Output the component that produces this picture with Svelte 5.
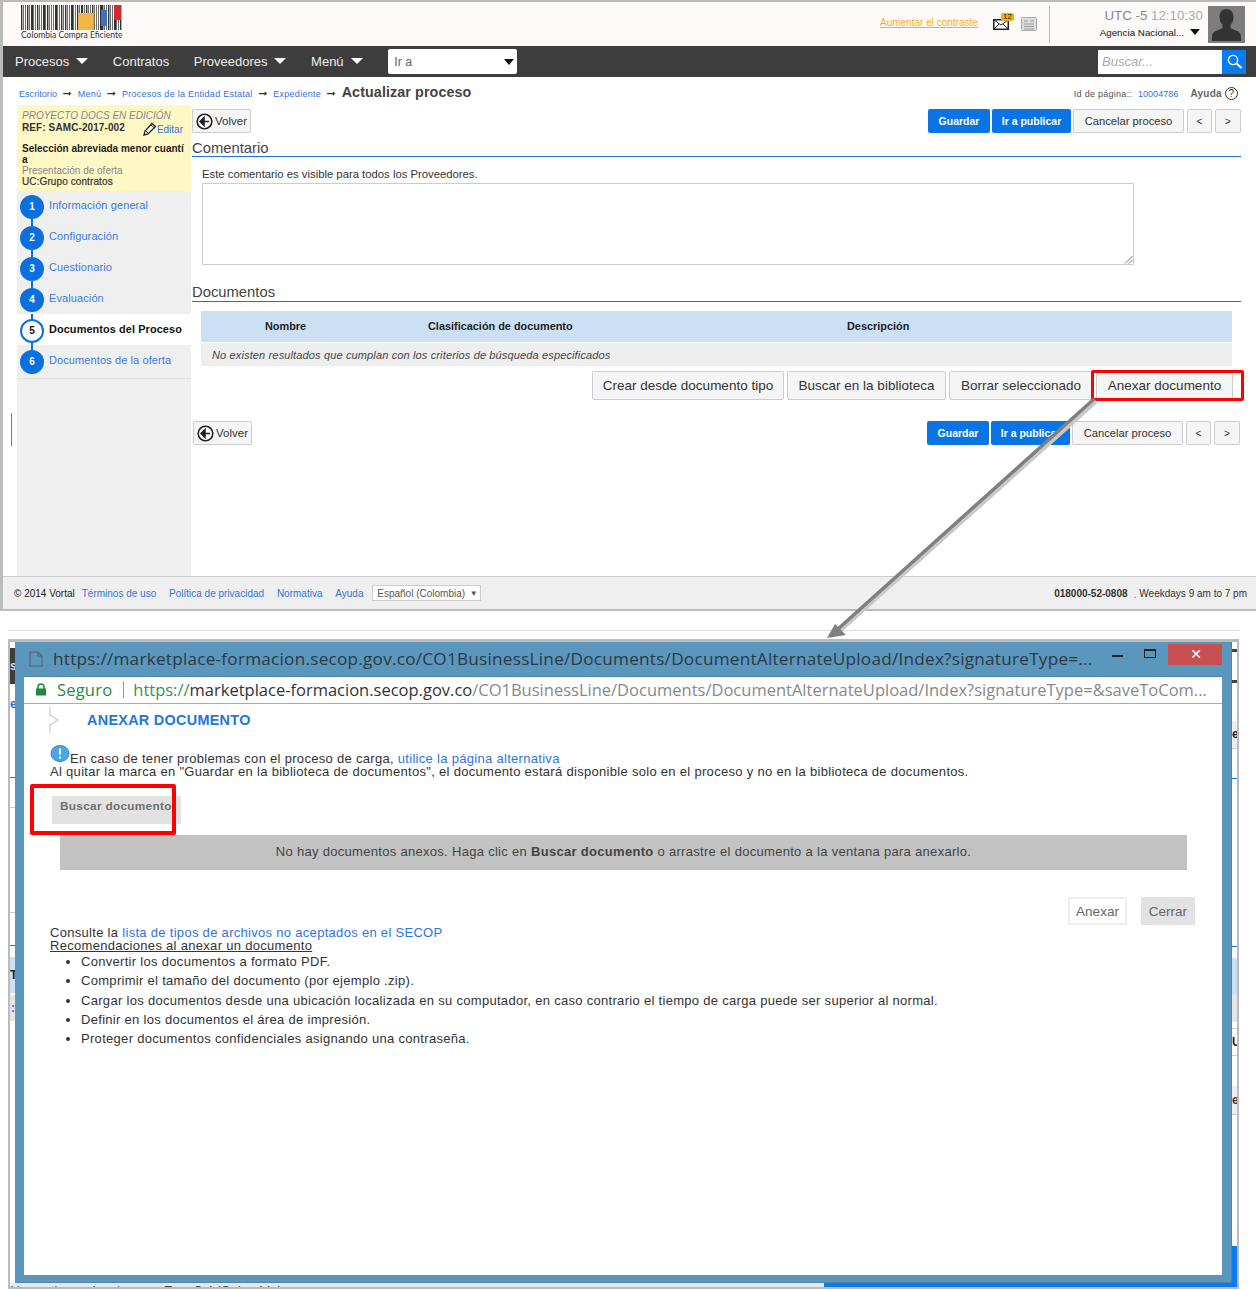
<script>
const navItems = [
	{ label: 'Procesos', caret: true },
	{ label: 'Contratos', caret: false },
	{ label: 'Proveedores', caret: true },
	{ label: 'Menú', caret: true }
];
const crumbs = ['Escritorio', 'Menú', 'Procesos de la Entidad Estatal', 'Expediente'];
const steps = [
	{ n: 1, label: 'Información general' },
	{ n: 2, label: 'Configuración' },
	{ n: 3, label: 'Cuestionario' },
	{ n: 4, label: 'Evaluación' },
	{ n: 5, label: 'Documentos del Proceso', active: true },
	{ n: 6, label: 'Documentos de la oferta' }
];
const tips = [
	'Convertir los documentos a formato PDF.',
	'Comprimir el tamaño del documento (por ejemplo .zip).',
	'Cargar los documentos desde una ubicación localizada en su computador, en caso contrario el tiempo de carga puede ser superior al normal.',
	'Definir en los documentos el área de impresión.',
	'Proteger documentos confidenciales asignando una contraseña.'
];
// slivers of the page behind the popup window: height, colour, clipped text
const leftSliver = [
	[6, '#fff'], [36, '#3d3d3d', 's', '#ddd'], [12, '#fff'], [16, '#fff', 'e', '#1a73d8'], [65, '#fff'], [1, '#1a73d8'],
	[29, '#fff'], [1, '#ccc'], [104, '#fff'], [1, '#ccc'], [32, '#fff'], [1, '#1a73d8'],
	[11, '#fff'], [36, '#cce0f5', 'T', '#222'], [2, '#fff'], [26, '#e6e6e6', ':', '#35c'], [262, '#fff'], [17, '#efefef']
];
const rightSliver = [
	[7, '#fff'], [3, '#444'], [28, '#fff'], [3, '#444'], [38, '#fff'], [27, '#eee', 'e', '#223'], [1, '#ccc'],
	[29, '#fff'], [1, '#1a73d8'], [167, '#fff'], [1, '#1a73d8'], [11, '#fff'], [36, '#cce0f5'],
	[28, '#e6e6e6'], [6, '#fff'], [1, '#ccc'], [26, '#fff', 'U', '#313'], [1, '#ccc'], [30, '#fff'], [28, '#eee', 'e:', '#433'],
	[1, '#ccc'], [131, '#fff'], [38, '#0a7cf0']
];
const bars = [2,1,1,2,1,3,1,1,2,1,1,3,1,2,1,1,1,3,1,1,2,1,2,1,1,3,1,1,2,1,3,1,2,1,1,2,1,1,1,3,2,1,1,2,1,1,3,1,1,2];
</script>

<div class="page">
	<section class="shot top">
		<header class="head">
			<div class="logo">
				<svg width="103" height="25" viewBox="0 0 103 25">
					{#each bars as w, i}
						<rect x={i * 2 + (i > 30 ? 1 : 0)} y="0" width={w * 0.7} height="25" fill="#333" />
					{/each}
					<rect x="57" y="8" width="15" height="17" fill="#f4b547" />
					<rect x="80" y="5" width="6" height="16" fill="#3d72b8" />
					<rect x="93" y="0" width="7" height="15" fill="#cf2b36" />
				</svg>
				<span>Colombia Compra Eficiente</span>
			</div>
			<a class="contrast">Aumentar el contraste</a>
			<div class="mail">
				<svg width="16" height="11" viewBox="0 0 16 11"><rect x="0.75" y="0.75" width="14.5" height="9.5" fill="#fff" stroke="#222" stroke-width="1.5" /><path d="M1 1l7 5 7-5M1 10l5-5M15 10l-5-5" fill="none" stroke="#222" /></svg>
				<b>12</b>
			</div>
			<svg class="news" width="16" height="14" viewBox="0 0 16 14"><rect x="0.5" y="0.5" width="15" height="13" rx="1" fill="#ddd" stroke="#aaa" /><path d="M3 4h4M3 7h10M3 9.5h10M3 12h10M9 4h4" stroke="#999" /></svg>
			<div class="divider"></div>
			<div class="user">
				<div class="clock">UTC -5 <span>12:10:30</span></div>
				<div class="agency">Agencia Nacional... <i class="caret black"></i></div>
			</div>
			<div class="avatar">
				<svg width="37" height="37" viewBox="0 0 37 37"><path d="M18.5 3c-5 0-7 4-7 8 0 3 1 6 3 8v3c-3 2-9 3-10 6-.6 2-.5 6-.5 7h29c0-1 .1-5-.5-7-1-3-7-4-10-6v-3c2-2 3-5 3-8 0-4-2-8-7-8z" fill="#333" /></svg>
			</div>
		</header>

		<nav class="nav">
			{#each navItems as item}
				<span class="nav-item">{item.label}{#if item.caret}<i class="caret"></i>{/if}</span>
			{/each}
			<div class="goto"><span>Ir a</span><i class="caret black"></i></div>
			<div class="search">
				<span>Buscar...</span>
				<b><svg width="17" height="17" viewBox="0 0 17 17"><circle cx="7" cy="7" r="4.6" fill="none" stroke="#fff" stroke-width="1.3" /><path d="M10.5 10.5l5 4.5" stroke="#fff" stroke-width="2" /></svg></b>
			</div>
		</nav>

		<div class="crumbs">
			{#each crumbs as c}
				<a>{c}</a><span class="arrow">➞</span>
			{/each}
			<strong>Actualizar proceso</strong>
			<span class="page-id">Id de página:: <a>10004786</a></span>
			<span class="help">Ayuda <i>?</i></span>
		</div>

		<div class="main">
			<div class="gutter"><div class="tick"></div></div>
			<aside class="side">
				<div class="project">
					<em>PROYECTO DOCS EN EDICIÓN</em>
					<div class="ref">
						<b>REF: SAMC-2017-002</b>
						<span class="edit">
							<svg width="14" height="14" viewBox="0 0 14 14"><path d="M1 13l1-4 7-7.5 3.500 3L5 12z" fill="#fff" stroke="#222" stroke-width="1.300" /><path d="M8 3l3.500 3M3 9l2.500 2.500" stroke="#222" /></svg><a>Editar</a>
						</span>
					</div>
					<b class="kind">Selección abreviada menor cuantí a</b>
					<span class="muted">Presentación de oferta</span>
					<b class="uc">UC:Grupo contratos</b>
				</div>
				<ul class="steps">
					{#each steps as s, i}
						<li class:active={s.active}>
							<span class="num" class:first={i === 0}>{s.n}</span>
							<span class="step-label">{s.label}</span>
						</li>
					{/each}
				</ul>
			</aside>

			<div class="content">
				<div class="toolbar">
					<button class="btn plain"><svg width="17" height="17" viewBox="0 0 17 17"><circle cx="8.500" cy="8.500" r="7.300" fill="#fff" stroke="#222" stroke-width="1.600" /><path d="M13 8.500H7M8 4.500l-4 4 4 4z" fill="#222" stroke="#222" stroke-width="1.500" /></svg>Volver</button>
					<div class="grow"></div>
					<button class="btn blue g">Guardar</button>
					<button class="btn blue p">Ir a publicar</button>
					<button class="btn plain c">Cancelar proceso</button>
					<button class="btn plain n lt">&lt;</button>
					<button class="btn plain n">&gt;</button>
				</div>

				<h2 class="sect first-sect">Comentario</h2>
				<p class="note">Este comentario es visible para todos los Proveedores.</p>
				<div class="textarea">
					<svg width="9" height="9" viewBox="0 0 9 9"><path d="M8.500 1L1 8.500M8.500 5L5 8.500" stroke="#777" /></svg>
				</div>

				<h2 class="sect doc-sect">Documentos</h2>
				<div class="table">
					<div class="thead"><b class="c1">Nombre</b><b class="c2">Clasificación de documento</b><b class="c3">Descripción</b></div>
					<div class="empty">No existen resultados que cumplan con los criterios de búsqueda especificados</div>
				</div>
				<div class="doc-actions">
					<button class="big w1">Crear desde documento tipo</button>
					<button class="big w2">Buscar en la biblioteca</button>
					<button class="big w3">Borrar seleccionado</button>
					<button class="big w4">Anexar documento<span class="red-box"></span></button>
				</div>

				<div class="toolbar lower">
					<button class="btn plain"><svg width="17" height="17" viewBox="0 0 17 17"><circle cx="8.500" cy="8.500" r="7.300" fill="#fff" stroke="#222" stroke-width="1.600" /><path d="M13 8.500H7M8 4.500l-4 4 4 4z" fill="#222" stroke="#222" stroke-width="1.500" /></svg>Volver</button>
					<div class="grow"></div>
					<button class="btn blue g">Guardar</button>
					<button class="btn blue p">Ir a publicar</button>
					<button class="btn plain c">Cancelar proceso</button>
					<button class="btn plain n lt">&lt;</button>
					<button class="btn plain n">&gt;</button>
				</div>
			</div>
		</div>

		<footer class="foot">
			<span class="copy">© 2014 Vortal</span>
			<a>Términos de uso</a><a>Política de privacidad</a><a>Normativa</a><a>Ayuda</a>
			<span class="lang">Español (Colombia) <i>▼</i></span>
			<div class="grow"></div>
			<b>018000-52-0808</b><span class="dot">.</span><span>Weekdays 9 am to 7 pm</span>
		</footer>
	</section>

	<hr class="sep" />

	<section class="shot2">
		<div class="body2">
			<div class="sliver left">
				{#each leftSliver as [h, bg, txt, col]}<div style="height:{h}px;line-height:{h}px;background:{bg};color:{col}">{txt ?? ''}</div>{/each}
			</div>
			<div class="win">
				<div class="win-title">
					<svg width="14" height="16" viewBox="0 0 14 16"><path d="M1 1h8l4 4v10H1zM9 1v4h4" fill="none" stroke="#5a6570" stroke-width="1.200" /></svg>
					<span class="win-url">https://marketplace-formacion.secop.gov.co/CO1BusinessLine/Documents/DocumentAlternateUpload/Index?signatureType=...</span>
					<i class="min"></i>
					<i class="max"></i>
					<span class="close">✕</span>
				</div>
				<div class="addr">
					<svg width="12" height="13" viewBox="0 0 12 13"><path d="M3 6V4a3 3 0 0 1 6 0v2" fill="none" stroke="#1e8a3e" stroke-width="1.600" /><rect x="1" y="5.500" width="10" height="7" fill="#1e8a3e" /></svg>
					<span class="secure">Seguro</span>
					<span class="pipe"></span>
					<span class="addr-url"><span class="https">https://</span>marketplace-formacion.secop.gov.co<span class="rest">/CO1BusinessLine/Documents/DocumentAlternateUpload/Index?signatureType=&amp;saveToCom...</span></span>
				</div>
				<div class="pane">
					<div class="pane-head">
						<svg width="11" height="26" viewBox="0 0 11 26"><path d="M1 0v8l8 5-8 5v8" fill="none" stroke="#ccc" stroke-width="1.200" /></svg>
						<h3>ANEXAR DOCUMENTO</h3>
					</div>
					<div class="msg">
						<p><svg class="info" width="20" height="17" viewBox="0 0 20 17"><ellipse cx="10" cy="8.500" rx="9" ry="8" fill="#4aa6e8" stroke="#2b86cf" /><path d="M10 3.500v6M10 11.500v2" stroke="#fff" stroke-width="2" /></svg>En caso de tener problemas con el proceso de carga, <a>utilice la página alternativa</a></p>
						<p>Al quitar la marca en "Guardar en la biblioteca de documentos", el documento estará disponible solo en el proceso y no en la biblioteca de documentos.</p>
					</div>
					<div class="find-row"><button class="find">Buscar documento</button><span class="red-box2"></span></div>
					<div class="nodocs">No hay documentos anexos. Haga clic en <b>Buscar documento</b> o arrastre el documento a la ventana para anexarlo.</div>
					<div class="win-actions">
						<button class="anx">Anexar</button>
						<button class="cls">Cerrar</button>
					</div>
					<div class="consult">Consulte la <a>lista de tipos de archivos no aceptados en el SECOP</a></div>
					<div class="rec">Recomendaciones al anexar un documento</div>
					<ul class="tips">
						{#each tips as t}<li>{t}</li>{/each}
					</ul>
				</div>
			</div>
			<div class="sliver">
				{#each rightSliver as [h, bg, txt, col]}<div style="height:{h}px;line-height:{h}px;background:{bg};color:{col}">{txt ?? ''}</div>{/each}
			</div>
		</div>
		<div class="strip">
			<div class="strip-grey"><a>Normativa</a><a>Ayuda</a><span>Español (Colombia)</span></div>
			<div class="strip-blue"></div>
		</div>
	</section>

	<svg class="pointer" width="1256" height="1290" viewBox="0 0 1256 1290">
		<line x1="1094" y1="399" x2="836" y2="630" stroke="#c9c9c9" stroke-width="5" transform="translate(2 2)" />
		<line x1="1094" y1="399" x2="838" y2="629" stroke="#808080" stroke-width="3.500" />
		<path d="M827 638l8-14 11 11z" fill="#808080" />
	</svg>
</div>

<style>
:global(body) {
	margin: 0;
	background: #fff;
}
.page {
	position: relative;
	width: 1256px;
	height: 1290px;
	overflow: hidden;
	font-family: "Liberation Sans", Arial, sans-serif;
	font-size: 11px;
	color: #222;
}
a {
	color: #2f74e0;
}
button {
	font-family: inherit;
	cursor: pointer;
}
.grow {
	flex: 1;
}
.caret {
	display: inline-block;
	width: 0;
	height: 0;
	border-left: 6px solid transparent;
	border-right: 6px solid transparent;
	border-top: 6px solid #fff;
}
.caret.black {
	border-top-color: #111;
	border-left-width: 5.500px;
	border-right-width: 5.500px;
}

/* top screenshot */
.shot.top {
	height: 607px;
	border-top: 2px solid #bbb;
	border-left: 3px solid #bbb;
	border-bottom: 2px solid #bbb;
	display: flex;
	flex-direction: column;
}
.head {
	height: 44px;
	background: #fffafa;
	display: flex;
	align-items: center;
	flex: none;
}
.logo {
	margin-left: 18px;
	margin-top: -2px;
	width: 110px;
	display: flex;
	flex-direction: column;
}
.logo svg {
	display: block;
}
.logo span {
	font-family: Lato, sans-serif;
	font-size: 8.500px;
	color: #333;
	margin-top: 0;
	line-height: 11px;
	white-space: nowrap;
}
.contrast {
	margin-left: 749px;
	margin-top: -4px;
	color: #f6ad2a;
	font-size: 10px;
	text-decoration: underline;
}
.mail {
	position: relative;
	margin-left: 15px;
	width: 16px;
	height: 11px;
	line-height: 0;
}
.mail b {
	position: absolute;
	left: 8px;
	top: -6px;
	width: 13px;
	height: 8px;
	background: #f2b100;
	border-radius: 2px;
	font-size: 8px;
	font-weight: normal;
	line-height: 8px;
	text-align: center;
}
.news {
	margin-left: 12px;
}
.divider {
	width: 1px;
	height: 37px;
	background: #bbb;
	margin-left: 12px;
}
.user {
	width: 158px;
	padding-right: 8px;
	box-sizing: border-box;
	text-align: right;
	margin-top: -3px;
}
.clock {
	font-size: 13.300px;
	color: #888;
	line-height: 16px;
	margin: 0 -3px 3px 0;
}
.clock span {
	color: #aaa;
}
.agency {
	font-size: 9.800px;
	color: #111;
}
.agency .caret {
	margin-left: 3px;
	vertical-align: 1px;
}
.avatar {
	width: 37px;
	height: 37px;
	background: #7d7d7d;
}
.nav {
	height: 31px;
	background: #3d3d3d;
	display: flex;
	align-items: center;
	flex: none;
	padding-left: 12px;
	color: #eee;
	font-size: 13px;
}
.nav-item {
	margin-right: 24.600px;
	white-space: nowrap;
}
.nav-item .caret {
	margin-left: 7px;
	vertical-align: 2px;
}
.goto {
	width: 129px;
	height: 25px;
	box-sizing: border-box;
	background: #fff;
	border-radius: 2px;
	margin-left: 1px;
	padding: 0 3px 0 6px;
	display: flex;
	align-items: center;
	justify-content: space-between;
	color: #666;
	font-size: 12.500px;
}
.search {
	margin-left: auto;
	margin-right: 10px;
	width: 148px;
	height: 24px;
	background: #fff;
	display: flex;
	align-items: center;
	color: #aaa;
	font-style: italic;
	font-size: 13px;
}
.search span {
	flex: 1;
	padding-left: 4px;
}
.search b {
	width: 24px;
	height: 24px;
	background: #0a7cf0;
	display: flex;
	align-items: center;
	justify-content: center;
}
.crumbs {
	height: 28px;
	box-sizing: border-box;
	padding: 5px 0 0 16px;
	display: flex;
	align-items: center;
	flex: none;
	font-size: 9px;
	letter-spacing: 0.270px;
}
.crumbs a:first-child {
	letter-spacing: 0.050px;
}
.crumbs .arrow {
	margin: 0 5.580px;
	font-size: 11px;
	color: #333;
	font-family: "DejaVu Sans", sans-serif;
}
.crumbs strong {
	font-size: 14.300px;
	color: #444;
	letter-spacing: 0.100px;
	margin-top: -3px;
}
.page-id {
	margin-left: auto;
	color: #555;
	margin-right: 2px;
}
.page-id a {
	margin-left: 3px;
}
.help {
	margin-left: 10px;
	margin-right: 18px;
	font-weight: bold;
	color: #666;
	font-size: 10px;
}
.help i {
	display: inline-block;
	width: 11px;
	height: 11px;
	border: 1px solid #333;
	border-radius: 50%;
	text-align: center;
	font-style: normal;
	font-weight: normal;
	line-height: 11px;
	font-size: 10px;
	color: #333;
}
.main {
	flex: 1;
	display: flex;
	min-height: 0;
}
.gutter {
	width: 14px;
	flex: none;
}
.tick {
	width: 1px;
	height: 33px;
	background: #777;
	margin: 308px 0 0 8px;
}
.side {
	width: 174px;
	flex: none;
	background: #efefef;
	display: flex;
	flex-direction: column;
}
.project {
	height: 86px;
	background: #fff7c4;
	box-sizing: border-box;
	padding: 5px 5px 0;
	display: flex;
	flex-direction: column;
	font-size: 10px;
	line-height: 11px;
}
.project em {
	color: #888;
	font-size: 10px;
}
.ref {
	display: flex;
	justify-content: space-between;
	align-items: flex-start;
	height: 21px;
	margin-top: 1px;
}
.ref b {
	font-size: 10px;
	letter-spacing: 0.100px;
	color: #333;
}
.edit {
	display: flex;
	align-items: center;
	margin-right: 3px;
}
.edit a {
	font-size: 10px;
}
.kind {
	font-size: 10px;
	color: #222;
	word-break: break-all;
}
.muted {
	color: #888;
}
.uc {
	color: #333;
	font-weight: normal;
	letter-spacing: 0.100px;
	-webkit-text-stroke: 0.200px #333;
}
.steps {
	list-style: none;
	margin: -1px 0 0;
	padding: 0 0 2px;
	border-bottom: 1px solid #e2e2e2;
}
.steps li {
	height: 31px;
	display: flex;
	align-items: center;
	color: #3a7ae6;
	font-size: 11px;
	letter-spacing: 0.100px;
}
.steps li.active {
	background: #fff;
	color: #111;
	font-weight: bold;
	font-size: 10.900px;
}
.step-label {
	margin-top: -1px;
}
.num {
	position: relative;
	width: 24px;
	height: 24px;
	box-sizing: border-box;
	border-radius: 50%;
	background: #0a70e0;
	color: #fff;
	font-weight: bold;
	font-size: 10px;
	line-height: 24px;
	text-align: center;
	margin: 2px 5px 0 3px;
	flex: none;
}
.num::before {
	content: '';
	position: absolute;
	left: 50%;
	top: -7px;
	margin-left: -1px;
	width: 2px;
	height: 7px;
	background: #0a70e0;
}
.num.first::before {
	display: none;
}
.active .num {
	background: #fff;
	color: #111;
	border: 2px solid #0a70e0;
	line-height: 20px;
}
.content {
	flex: 1;
	min-width: 0;
	padding: 0 15px 0 1px;
}
.toolbar {
	display: flex;
	height: 24px;
	margin-top: 4px;
	gap: 2px;
}
.btn {
	height: 24px;
	box-sizing: border-box;
	padding: 0;
	border-radius: 2px;
	font-size: 11.500px;
	display: flex;
	align-items: center;
	justify-content: center;
}
.btn.plain {
	background: #f5f5f5;
	border: 1px solid #ccc;
	color: #333;
	min-width: 59px;
	gap: 2px;
}
.btn.blue {
	background: #0a74e4;
	border: 0;
	color: #fff;
	font-weight: bold;
	font-size: 10.500px;
}
.g {
	width: 62px;
}
.p {
	width: 79px;
}
.btn.c {
	width: 111px;
	font-size: 11.200px;
}
.btn.n {
	width: 26px;
	min-width: 0;
	margin-left: 1px;
	font-size: 10px;
}
.btn.n.lt {
	width: 25px;
}
.sect {
	margin: 0;
	font-weight: normal;
	font-size: 14.800px;
	line-height: 19px;
	color: #444;
	border-bottom: 1px solid #1a73d8;
	height: 17px;
}
.first-sect {
	margin-top: 6px;
}
.note {
	margin: 11px 0 0 10px;
	font-size: 11.300px;
	line-height: 13px;
	color: #333;
}
.textarea {
	margin: 2px 0 0 10px;
	width: 932px;
	height: 82px;
	box-sizing: border-box;
	background: #fff;
	border: 1px solid #ccc;
	display: flex;
	justify-content: flex-end;
	align-items: flex-end;
}
.sect.doc-sect {
	margin-top: 18px;
	height: 18px;
}
.table {
	margin: 9px 9px 0 9px;
}
.thead {
	position: relative;
	height: 31px;
	background: #cce0f5;
	font-size: 10.900px;
	line-height: 31px;
	color: #222;
}
.thead b {
	position: absolute;
	top: 0;
}
.c1 {
	left: 64px;
}
.c2 {
	left: 227px;
}
.c3 {
	left: 646px;
}
.empty {
	margin-top: 1px;
	height: 23px;
	background: #eee;
	padding-left: 11px;
	font-style: italic;
	font-size: 11px;
	letter-spacing: 0.140px;
	line-height: 24px;
	color: #444;
}
.doc-actions {
	display: flex;
	justify-content: flex-end;
	gap: 3px;
	margin: 5px 8px 0 0;
}
.big {
	position: relative;
	height: 29px;
	padding: 0;
	background: #f5f5f5;
	border: 1px solid #ccc;
	border-radius: 2px;
	font-size: 13.500px;
	color: #333;
}
.w1 {
	width: 192px;
}
.w2 {
	width: 159px;
}
.w3 {
	width: 144px;
}
.w4 {
	width: 137px;
}
.red-box {
	position: absolute;
	left: -6px;
	top: -2px;
	width: 153px;
	height: 31px;
	border: 3px solid #f00;
	border-radius: 2px;
	box-sizing: border-box;
}
.toolbar.lower {
	margin-top: 21px;
	padding: 0 1px;
}
.foot {
	height: 32px;
	flex: none;
	background: #efefef;
	border-top: 1px solid #ccc;
	display: flex;
	align-items: center;
	padding: 0 9px 0 11px;
	font-size: 10px;
	color: #333;
	gap: 12.800px;
}
.copy {
	margin-right: -5.800px;
	color: #222;
}
.lang {
	background: #fff;
	border: 1px solid #ccc;
	height: 16px;
	width: 109px;
	box-sizing: border-box;
	padding-left: 4px;
	line-height: 15px;
	color: #555;
	margin-left: -4px;
	white-space: nowrap;
}
.lang i {
	font-style: normal;
	font-size: 8px;
	margin-left: 2px;
	vertical-align: 1px;
}
.foot .dot {
	margin: 0 -9.800px -2px -6.800px;
	color: #3a7ae6;
}

/* separator and second screenshot */
.sep {
	margin: 19px 16px 8px 8px;
	border: 0;
	border-top: 1px solid #ddd;
	height: 0;
}
.shot2 {
	margin-left: 8px;
	width: 1231px;
	box-sizing: border-box;
	height: 650px;
	border: 2px solid #bbb;
	border-top-width: 3px;
	background: #fff;
	overflow: hidden;
}
.body2 {
	display: flex;
	height: 641px;
}
.sliver {
	width: 5px;
	flex: none;
	overflow: hidden;
	font-size: 12px;
	font-weight: bold;
	white-space: nowrap;
}
.sliver.left {
	text-align: right;
}
.strip {
	display: flex;
	height: 4px;
}
.strip-grey {
	width: 814px;
	background: #e8e8e8;
	overflow: hidden;
	display: flex;
	gap: 18px;
	font-size: 13.500px;
	line-height: 15px;
}
.strip-grey a {
	text-decoration: underline;
}
.strip-grey span {
	margin-left: 18px;
	color: #444;
}
.strip-blue {
	flex: 1;
	background: #0a7cf0;
}
.win {
	flex: 1;
	background: #5b96bc;
	border-bottom: 1px solid #5585a5;
	border-right: 1px solid #5585a5;
	box-sizing: border-box;
	padding: 0 9px 7px 9px;
	display: flex;
	flex-direction: column;
	min-width: 0;
}
.win-title {
	height: 34px;
	flex: none;
	display: flex;
	align-items: center;
	margin-left: -1px;
	overflow: hidden;
	font-family: "Open Sans", sans-serif;
	color: #2b3a44;
}
.win-title svg {
	margin-left: 6px;
	flex: none;
}
.win-url {
	margin-left: 10px;
	width: 1045px;
	flex: none;
	font-size: 17.200px;
	letter-spacing: 0.230px;
	white-space: nowrap;
	padding-bottom: 2px;
}
.min {
	width: 11px;
	height: 2px;
	background: #222;
	margin: -6px 0 0 14px;
	flex: none;
}
.max {
	width: 10px;
	height: 6px;
	border: 1px solid #222;
	border-top-width: 2px;
	margin: -12px 0 0 21px;
	flex: none;
}
.close {
	width: 56px;
	height: 21px;
	margin: -10px 0 0 12px;
	background: #c75050;
	color: #fff;
	text-align: center;
	font-size: 14px;
	line-height: 21px;
	font-family: "DejaVu Sans", sans-serif;
	flex: none;
}
.addr {
	height: 28px;
	flex: none;
	background: #fff;
	border-bottom: 1px solid #aaa;
	box-sizing: border-box;
	display: flex;
	align-items: center;
	padding: 0 0 2px 11px;
	font-family: "Open Sans", sans-serif;
	font-size: 16.500px;
	white-space: nowrap;
	overflow: hidden;
	border-top: 1px solid #4d87ab;
}
.secure {
	color: #2b8a44;
	margin-left: 10px;
	letter-spacing: 0.200px;
}
.pipe {
	width: 1px;
	height: 17px;
	background: #999;
	margin: 0 9px 0 11px;
}
.addr-url {
	color: #333;
}
.https {
	color: #3c8f55;
}
.rest {
	color: #888;
}
.pane {
	flex: 1;
	background: #fff;
	padding-left: 26px;
	min-height: 0;
	font-size: 13px;
	letter-spacing: 0.300px;
	color: #333;
}
.pane-head {
	display: flex;
	align-items: flex-start;
	height: 39px;
}
.pane-head svg {
	margin-top: 3px;
	margin-left: -1px;
}
.pane-head h3 {
	margin: 8px 0 0 27px;
	font-size: 14.400px;
	letter-spacing: 0.300px;
	color: #2277dd;
	line-height: 17px;
}
.msg p {
	margin: 0;
	line-height: 13px;
	position: relative;
}
.msg p:first-child {
	padding-left: 20px;
	margin-top: 9px;
}
.info {
	position: absolute;
	left: 0;
	top: -7px;
}
.find-row {
	position: relative;
	height: 28px;
	margin: 18px 0 0 2px;
}
.find {
	width: 129px;
	height: 28px;
	background: #e2e2e2;
	border: 0;
	color: #707070;
	font-weight: bold;
	font-size: 11.800px;
	padding: 0 0 8px 8px;
	text-align: left;
	letter-spacing: 0.300px;
	white-space: nowrap;
}
.red-box2 {
	position: absolute;
	left: -22px;
	top: -12px;
	width: 146px;
	height: 51px;
	border: 4px solid #f00;
	border-radius: 2px;
	box-sizing: border-box;
}
.nodocs {
	margin: 11px 0 0 10px;
	width: 1127px;
	height: 35px;
	line-height: 34px;
	background: #c2c2c2;
	text-align: center;
	color: #444;
}
.win-actions {
	display: flex;
	justify-content: flex-end;
	gap: 14px;
	margin: 27px 27px 0 0;
}
.win-actions button {
	height: 28px;
	font-size: 13.500px;
	color: #666;
	padding: 0;
	font-family: inherit;
}
.anx {
	width: 59px;
	background: #fff;
	border: 2px solid #eee;
}
.cls {
	width: 54px;
	background: #e2e2e2;
	border: 0;
}
.consult {
	margin-top: 1px;
	line-height: 13px;
}
.rec {
	line-height: 13px;
	text-decoration: underline;
}
.tips {
	margin: 0;
	padding-left: 31px;
}
.tips li {
	line-height: 19.300px;
}
.pointer {
	position: absolute;
	left: 0;
	top: 0;
	pointer-events: none;
}
</style>
